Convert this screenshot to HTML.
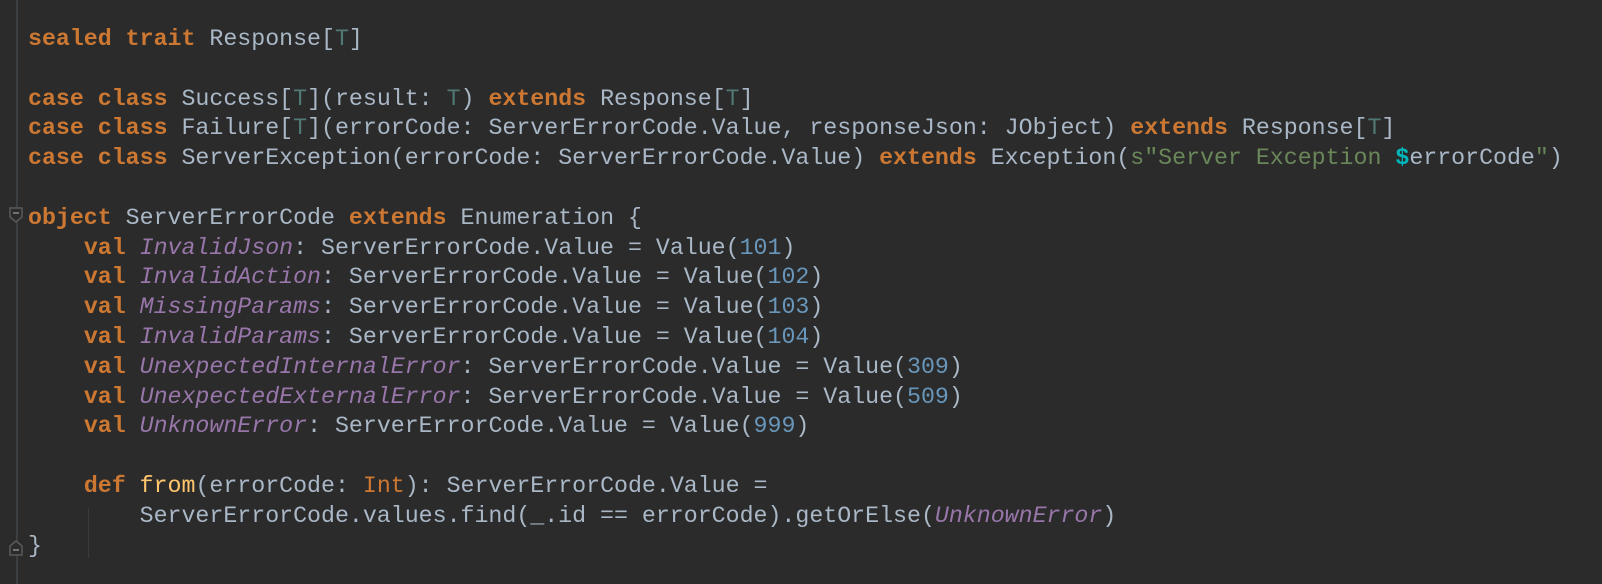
<!DOCTYPE html>
<html><head><meta charset="utf-8"><style>
html,body{margin:0;padding:0;background:#2b2b2b;width:1602px;height:584px;overflow:hidden}
.g{position:absolute;left:16px;top:0;width:2px;height:584px;background:#3c3f41}
pre{position:absolute;left:28px;top:25px;margin:0;font-family:"Liberation Mono",monospace;font-size:23.26px;line-height:29.8px;color:#a9b7c6}
.k{color:#cc7832;font-weight:bold}.t{color:#507874}.p{color:#9876aa;font-style:italic}.n{color:#6897bb}.s{color:#6a8759}.d{color:#00b8bb;font-weight:bold}.f{color:#ffc66d}.i{color:#cc7832}
.fold{position:absolute;left:9px;width:14px;height:16px}
.ind{position:absolute;left:88px;top:508px;width:1px;height:50px;background:#3b3b3b}
</style></head><body>
<div class="g"></div>
<svg class="fold" style="top:207px" viewBox="0 0 14 16"><path d="M1 1H13V10L7 15L1 10Z" fill="#2b2b2b" stroke="#5a5a5a" stroke-width="1.5"/><path d="M4 6H10" stroke="#8a8a8a" stroke-width="1.5"/></svg>
<svg class="fold" style="top:540px" viewBox="0 0 14 16"><path d="M1 15H13V6L7 1L1 6Z" fill="#2b2b2b" stroke="#5a5a5a" stroke-width="1.5"/><path d="M4 10H10" stroke="#8a8a8a" stroke-width="1.5"/></svg>
<div class="ind"></div>
<pre><span class="k">sealed trait</span> Response[<span class="t">T</span>]

<span class="k">case class</span> Success[<span class="t">T</span>](result: <span class="t">T</span>) <span class="k">extends</span> Response[<span class="t">T</span>]
<span class="k">case class</span> Failure[<span class="t">T</span>](errorCode: ServerErrorCode.Value, responseJson: JObject) <span class="k">extends</span> Response[<span class="t">T</span>]
<span class="k">case class</span> ServerException(errorCode: ServerErrorCode.Value) <span class="k">extends</span> Exception(<span class="s">s"Server Exception </span><span class="d">$</span>errorCode<span class="s">"</span>)

<span class="k">object</span> ServerErrorCode <span class="k">extends</span> Enumeration {
    <span class="k">val</span> <span class="p">InvalidJson</span>: ServerErrorCode.Value = Value(<span class="n">101</span>)
    <span class="k">val</span> <span class="p">InvalidAction</span>: ServerErrorCode.Value = Value(<span class="n">102</span>)
    <span class="k">val</span> <span class="p">MissingParams</span>: ServerErrorCode.Value = Value(<span class="n">103</span>)
    <span class="k">val</span> <span class="p">InvalidParams</span>: ServerErrorCode.Value = Value(<span class="n">104</span>)
    <span class="k">val</span> <span class="p">UnexpectedInternalError</span>: ServerErrorCode.Value = Value(<span class="n">309</span>)
    <span class="k">val</span> <span class="p">UnexpectedExternalError</span>: ServerErrorCode.Value = Value(<span class="n">509</span>)
    <span class="k">val</span> <span class="p">UnknownError</span>: ServerErrorCode.Value = Value(<span class="n">999</span>)

    <span class="k">def</span> <span class="f">from</span>(errorCode: <span class="i">Int</span>): ServerErrorCode.Value =
        ServerErrorCode.values.find(_.id == errorCode).getOrElse(<span class="p">UnknownError</span>)
}</pre>
</body></html>
